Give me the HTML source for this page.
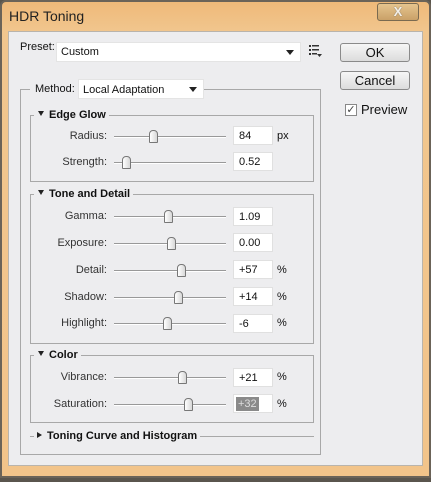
<!DOCTYPE html>
<html><head><style>
*{margin:0;padding:0;box-sizing:border-box}
body{width:431px;height:482px;background:#5a554d;font-family:"Liberation Sans",sans-serif;font-size:11px;color:#111;position:relative;overflow:hidden}
.frame{position:absolute;left:0;top:0;width:431px;height:478px;border:2px solid #6b6358;border-radius:6px 6px 0 0;background:linear-gradient(#efb979,#f1c68e 30px,#f2c48a)}
.title{position:absolute;left:9px;top:8px;font-size:14px;color:#222}
.close{position:absolute;left:377px;top:3px;width:42px;height:18px;border:1px solid #7a6a50;border-radius:3px;background:linear-gradient(#e6c48e,#c9a168);color:#f4f0e8;font-weight:bold;font-size:13px;text-align:center;line-height:16px;text-shadow:0 0 1px #555}
.panel{position:absolute;left:8px;top:31px;width:415px;height:435px;background:#ededef;border:1px solid #b9b4ac}
.a{position:absolute}
.dd{position:absolute;background:#fff;border:1px solid #e4e4e4}
.dd i{position:absolute;right:6px;top:7px;width:0;height:0;border-left:4px solid transparent;border-right:4px solid transparent;border-top:5px solid #222}
.btn{position:absolute;left:340px;width:70px;height:19px;border:1px solid #8a8a8a;border-radius:3px;background:linear-gradient(#f6f6f6,#dcdcdc);text-align:center;font-size:13px;line-height:17px}
.box{position:absolute;border:1px solid #a8a8a8}
.hd{position:absolute;background:#ededef;font-weight:bold;font-size:11px;padding:0 3px 0 4px;top:-8px;left:3px;line-height:14px}
.hd b{display:inline-block;width:0;height:0;border-left:3px solid transparent;border-right:3px solid transparent;border-top:5px solid #222;margin-right:5px;vertical-align:2px}
.lbl{position:absolute;right:324px;text-align:right;font-size:11px;color:#333}
.trk{position:absolute;left:114px;width:112px;height:2px;border-top:1px solid #999;border-bottom:1px solid #fff}
.th{position:absolute;width:9px;height:13px;background:linear-gradient(90deg,#fff,#d8d8d8);border:1px solid #777;border-radius:4px 4px 1px 1px}
.inp{position:absolute;left:233px;width:40px;height:19px;background:#fff;border:1px solid #e0e0e0;padding-left:5px;line-height:18px;font-size:11px}
.u{position:absolute;left:277px;font-size:11px}
</style></head><body>
<div class="frame"></div>
<div class="title">HDR Toning</div>
<div class="close">X</div>
<div class="panel"></div>
<div class="a" style="left:20px;top:41px">Preset:</div>
<div class="dd" style="left:56px;top:42px;width:245px;height:20px"><span class="a" style="left:4px;top:3px">Custom</span><i></i></div>
<svg class="a" style="left:309px;top:45px" width="13" height="12"><g fill="#333"><rect x="0" y="0" width="2" height="2"/><rect x="0" y="4" width="2" height="2"/><rect x="0" y="8" width="2" height="2"/><rect x="3" y="0" width="7" height="1.5"/><rect x="3" y="4" width="7" height="1.5"/><rect x="3" y="8" width="5" height="1.5"/><path d="M8 9h5l-2.5 3z"/></g></svg>
<div class="btn" style="top:43px">OK</div>
<div class="btn" style="top:71px">Cancel</div>
<div class="a" style="left:345px;top:104px;width:12px;height:12px;border:1px solid #888;background:#fff;font-size:11px;line-height:10px;text-align:center;color:#444">✓</div>
<div class="a" style="left:361px;top:102px;font-size:13px">Preview</div>

<div class="box" style="left:20px;top:89px;width:301px;height:366px"></div>
<div class="a" style="left:30px;top:82px;width:170px;height:16px;background:#ededef"></div>
<div class="a" style="left:35px;top:83px">Method:</div>
<div class="dd" style="left:78px;top:79px;width:126px;height:20px"><span class="a" style="left:4px;top:4px">Local Adaptation</span><i></i></div>

<div class="box" style="left:30px;top:115px;width:284px;height:67px"><div class="hd"><b></b>Edge Glow</div></div>
<div class="lbl" style="top:130px">Radius:</div><div class="trk" style="top:136px"></div><div class="th" style="left:149px;top:130px"></div><div class="inp" style="top:126px">84</div><div class="u" style="top:130px">px</div>
<div class="lbl" style="top:156px">Strength:</div><div class="trk" style="top:162px"></div><div class="th" style="left:122px;top:156px"></div><div class="inp" style="top:152px">0.52</div>

<div class="box" style="left:30px;top:194px;width:284px;height:150px"><div class="hd"><b></b>Tone and Detail</div></div>
<div class="lbl" style="top:210px">Gamma:</div><div class="trk" style="top:216px"></div><div class="th" style="left:164px;top:210px"></div><div class="inp" style="top:207px">1.09</div>
<div class="lbl" style="top:237px">Exposure:</div><div class="trk" style="top:243px"></div><div class="th" style="left:167px;top:237px"></div><div class="inp" style="top:233px">0.00</div>
<div class="lbl" style="top:264px">Detail:</div><div class="trk" style="top:270px"></div><div class="th" style="left:177px;top:264px"></div><div class="inp" style="top:260px">+57</div><div class="u" style="top:264px">%</div>
<div class="lbl" style="top:291px">Shadow:</div><div class="trk" style="top:297px"></div><div class="th" style="left:174px;top:291px"></div><div class="inp" style="top:287px">+14</div><div class="u" style="top:291px">%</div>
<div class="lbl" style="top:317px">Highlight:</div><div class="trk" style="top:323px"></div><div class="th" style="left:163px;top:317px"></div><div class="inp" style="top:314px">-6</div><div class="u" style="top:317px">%</div>

<div class="box" style="left:30px;top:355px;width:284px;height:68px"><div class="hd"><b></b>Color</div></div>
<div class="lbl" style="top:371px">Vibrance:</div><div class="trk" style="top:377px"></div><div class="th" style="left:178px;top:371px"></div><div class="inp" style="top:368px">+21</div><div class="u" style="top:371px">%</div>
<div class="lbl" style="top:398px">Saturation:</div><div class="trk" style="top:404px"></div><div class="th" style="left:184px;top:398px"></div><div class="inp" style="top:394px;padding-left:2px"><span style="background:#8a8a8a;color:#ddd;padding:1px 2px">+32</span></div><div class="u" style="top:398px">%</div>

<div class="a" style="left:30px;top:436px;width:284px;border-top:1px solid #a8a8a8"></div>
<div class="a" style="left:34px;top:429px;background:#ededef;padding:0 3px;font-weight:bold;line-height:14px"><b style="display:inline-block;width:0;height:0;border-top:3px solid transparent;border-bottom:3px solid transparent;border-left:5px solid #222;margin-right:5px;vertical-align:1px"></b>Toning Curve and Histogram</div>
</body></html>
